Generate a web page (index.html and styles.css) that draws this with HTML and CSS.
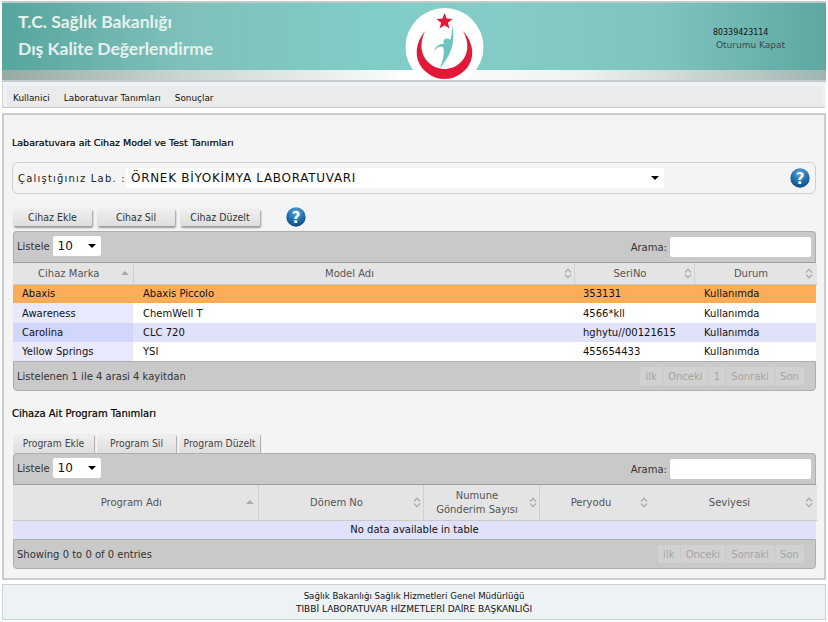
FILE: index.html
```html
<!DOCTYPE html>
<html lang="tr">
<head>
<meta charset="utf-8">
<title>Dış Kalite Değerlendirme</title>
<link rel="stylesheet" href="styles.css">
</head>
<body>
<svg class="defs" width="0" height="0" aria-hidden="true">
  <defs>
    <radialGradient id="hg" cx="0.5" cy="0.25" r="0.75">
      <stop offset="0" stop-color="#5aa6da"/>
      <stop offset="0.55" stop-color="#2273b0"/>
      <stop offset="1" stop-color="#114a7c"/>
    </radialGradient>
    <symbol id="help" viewBox="0 0 20 20">
      <circle cx="10" cy="10" r="9.7" fill="url(#hg)"/>
      <text x="10" y="15.5" text-anchor="middle" class="help-q">?</text>
    </symbol>
    <symbol id="sort" viewBox="0 0 8 11">
      <path d="M1 4.500 L4 1.200 L7 4.500 M1 6.500 L4 9.800 L7 6.500" fill="none" stroke="#aeaeae" stroke-width="1.300"/>
    </symbol>
  </defs>
</svg>
<header class="banner">
  <div class="banner-main">
    <div class="brand">
      <div class="brand-line">T.C. Sağlık Bakanlığı</div>
      <div class="brand-line">Dış Kalite Değerlendirme</div>
    </div>
    <div class="user">
      <div class="user-id">80339423114</div>
      <div class="user-out">Oturumu Kapat</div>
    </div>
  </div>
  <div class="banner-band"></div>
  <svg class="logo" width="80" height="72" viewBox="0 0 80 72">
    <circle cx="39.5" cy="39" r="39" fill="#fff"/>
    <path d="M20 23 C10 35 9 50 17 60 C24 68 32 71 39.5 71 C47 71 55 68 62 60 C70 50 69 35 58 23 C65 36 63 47 56 54 C51 59 45 61 39.5 61 C34 61 28 59 23 54 C16 47 14 36 20 23 Z" fill="#e31837"/>
    <polygon points="39.5,5 41.6,10.6 47.6,10.9 42.9,14.7 44.5,20.5 39.5,17.2 34.5,20.5 36.1,14.7 31.4,10.9 37.4,10.6" fill="#e31837"/>
    <circle cx="42" cy="34" r="3.500" fill="#6cc5c0"/>
    <path d="M47 17 C50 30 49 44 35 60 C38 51 40 46 38 39 C35 38 32 39 29 43 C31 38 35 35 40 36 C46 36 47 27 47 17 Z" fill="#6cc5c0"/>
  </svg>
</header>
<nav class="menu">
  <a class="menu-item">Kullanici</a>
  <a class="menu-item">Laboratuvar Tanımları</a>
  <a class="menu-item">Sonuçlar</a>
</nav>
<main class="content">
  <h1 class="page-title">Labaratuvara ait Cihaz Model ve Test Tanımları</h1>
  <section class="lab-box">
    <span class="lab-label">Çalıştığınız Lab. :</span>
    <div class="lab-select"><span>ÖRNEK BİYOKİMYA LABORATUVARI</span><i class="caret"></i></div>
    <svg class="help help-right"><use href="#help"/></svg>
  </section>
  <div class="actions">
    <button class="btn btn-1">Cihaz Ekle</button>
    <button class="btn btn-2">Cihaz Sil</button>
    <button class="btn btn-3">Cihaz Düzelt</button>
    <svg class="help help-inline"><use href="#help"/></svg>
  </div>
  <section class="dt">
    <div class="dt-top">
      <div class="dt-len">Listele <div class="len-select"><span>10</span><i class="caret"></i></div></div>
      <div class="dt-search">Arama: <div class="search-input"></div></div>
    </div>
    <table class="grid">
      <colgroup><col class="c1a"><col class="c1b"><col class="c1c"><col class="c1d"></colgroup>
      <thead>
        <tr>
          <th class="sorted">Cihaz Marka<i class="sort-up"></i></th>
          <th>Model Adı<svg class="sort-both"><use href="#sort"/></svg></th>
          <th>SeriNo<svg class="sort-both"><use href="#sort"/></svg></th>
          <th>Durum<svg class="sort-both"><use href="#sort"/></svg></th>
        </tr>
      </thead>
      <tbody>
        <tr class="selected"><td>Abaxis</td><td>Abaxis Piccolo</td><td>353131</td><td>Kullanımda</td></tr>
        <tr class="odd tall"><td>Awareness</td><td>ChemWell T</td><td>4566*kll</td><td>Kullanımda</td></tr>
        <tr class="even"><td>Carolina</td><td>CLC 720</td><td>hghytu//00121615</td><td>Kullanımda</td></tr>
        <tr class="odd"><td>Yellow Springs</td><td>YSI</td><td>455654433</td><td>Kullanımda</td></tr>
      </tbody>
    </table>
    <div class="dt-bottom">
      <div class="dt-info">Listelenen 1 ile 4 arasi 4 kayitdan</div>
      <div class="pager"><span>ilk</span><span>Onceki</span><span>1</span><span>Sonraki</span><span>Son</span></div>
    </div>
  </section>
  <h2 class="sub-title">Cihaza Ait Program Tanımları</h2>
  <div class="tabs">
    <button class="tab tab-1">Program Ekle</button>
    <button class="tab tab-2">Program Sil</button>
    <button class="tab tab-3">Program Düzelt</button>
  </div>
  <section class="dt">
    <div class="dt-top">
      <div class="dt-len">Listele <div class="len-select"><span>10</span><i class="caret"></i></div></div>
      <div class="dt-search">Arama: <div class="search-input"></div></div>
    </div>
    <table class="grid grid-2">
      <colgroup><col class="c2a"><col class="c2b"><col class="c2c"><col class="c2d"><col class="c2e"></colgroup>
      <thead>
        <tr>
          <th class="sorted">Program Adı<i class="sort-up"></i></th>
          <th>Dönem No<svg class="sort-both"><use href="#sort"/></svg></th>
          <th>Numune<br>Gönderim Sayısı<svg class="sort-both"><use href="#sort"/></svg></th>
          <th class="plain-right">Peryodu<svg class="sort-both"><use href="#sort"/></svg></th>
          <th>Seviyesi<svg class="sort-both"><use href="#sort"/></svg></th>
        </tr>
      </thead>
      <tbody>
        <tr class="even"><td class="empty" colspan="5">No data available in table</td></tr>
      </tbody>
    </table>
    <div class="dt-bottom">
      <div class="dt-info">Showing 0 to 0 of 0 entries</div>
      <div class="pager"><span>ilk</span><span>Onceki</span><span>Sonraki</span><span>Son</span></div>
    </div>
  </section>
</main>
<footer class="foot">
  <div class="foot-1">Sağlık Bakanlığı Sağlık Hizmetleri Genel Müdürlüğü</div>
  <div>TIBBİ LABORATUVAR HİZMETLERİ DAİRE BAŞKANLIĞI</div>
</footer>
</body>
</html>
```
FILE: styles.css
```css
* { box-sizing: border-box; }
html, body { margin: 0; padding: 0; }
body {
  width: 828px;
  height: 622px;
  overflow: hidden;
  background: #fff;
  color: #111;
  font-family: "DejaVu Sans", sans-serif;
  font-size: 10px;
  padding: 1px 2px 0 2px;
}
.defs { position: absolute; }
.help-q { font: bold 15px "DejaVu Sans", sans-serif; fill: #fff; }

.banner {
  position: relative;
  width: 824px;
  height: 81px;
  border-top: 2px solid #c3c9c8;
  border-bottom: 2px solid #c6c9ca;
}
.banner-main {
  height: 67px;
  display: flex;
  justify-content: space-between;
  background: linear-gradient(90deg, #55a69e 0%, #80c0ba 22%, #7fcdc7 45%, #84cbc6 62%, #7fc4be 80%, #5ea8a2 100%);
}
.banner-band {
  height: 10px;
  background: linear-gradient(90deg, #97aaa6 0%, #c9d6d4 22%, #f4f7f7 45%, #ffffff 50%, #eef2f2 70%, #c2d0ce 87%, #9fb5b1 100%);
}
.brand { padding: 5px 0 0 16px; }
.brand-line {
  font-family: Lato, sans-serif;
  font-weight: 700;
  font-size: 17.500px;
  line-height: 27px;
  color: #e6f1ef;
}
.user { width: 113px; padding-top: 23px; line-height: 13px; font-size: 9px; }
.user-id { color: #111; font-size: 8.800px; font-family: "DejaVu Sans Condensed", "DejaVu Sans", sans-serif; }
.user-out { color: #3d4a48; padding-left: 3px; }
.logo { position: absolute; left: 403px; top: 5px; }

.menu {
  width: 824px;
  height: 26px;
  display: flex;
  align-items: center;
  gap: 14px;
  padding: 2px 0 0 10px;
  background: #ebebeb;
  border-top: 4px solid #eef2f6;
  border-right: 3px solid #eef2f6;
  border-bottom: 1px solid #c8c8c8;
  border-left: 1px solid #cdd0d2;
  box-shadow: inset 4px 0 0 #eef2f6;
}
.menu-item { color: #111; font-size: 8.900px; }

.content {
  margin-top: 5px;
  width: 824px;
  height: 467px;
  background: #f4f4f4;
  border: 2px solid #cbcbcb;
  padding: 0 10px 0 8px;
}
.page-title {
  margin: 0;
  padding-top: 22px;
  height: 47px;
  font-size: 9.500px;
  font-weight: normal;
  color: #000;
  line-height: 12px;
  -webkit-text-stroke: 0.2px #000;
}
.lab-box {
  height: 32px;
  width: 804px;
  display: flex;
  align-items: center;
  border: 1px solid #cfcfcf;
  border-radius: 6px;
  padding: 0 5px 0 5px;
}
.lab-label { font-size: 10px; letter-spacing: 1.200px; width: 108px; color: #222; white-space: nowrap; }
.lab-select {
  width: 538px;
  height: 20px;
  background: #fff;
  border-radius: 2px;
  display: flex;
  align-items: center;
  justify-content: space-between;
  padding: 0 5px;
  font-size: 12px;
  letter-spacing: 0.700px;
  color: #111;
}
.caret {
  width: 0;
  height: 0;
  border-left: 4px solid transparent;
  border-right: 4px solid transparent;
  border-top: 4px solid #000;
}
.help { width: 20px; height: 20px; display: block; }
.help-right { margin-left: auto; }
.actions { display: flex; align-items: flex-start; margin-top: 14px; height: 23px; }
.btn {
  height: 18px;
  padding: 0;
  border: 0;
  border-radius: 2px;
  font: 10.500px "DejaVu Sans Condensed", "DejaVu Sans", sans-serif;
  color: #333;
  background: linear-gradient(#f0f0f0, #dedede);
  box-shadow: 1px 2px 2px #9a9a9a;
}
.btn-1 { width: 79px; margin-right: 5px; margin-left: 1px; }
.btn-2 { width: 78px; margin-right: 5px; }
.btn-3 { width: 80px; margin-right: 26px; }
.help-inline { margin-top: -1px; }

.dt { width: 803px; margin-left: 1px; }
.dt-top {
  height: 32px;
  background: #c9c9c9;
  border: 1px solid #aeaeae;
  border-bottom-color: #9d9d9d;
  border-radius: 4px 4px 0 0;
  display: flex;
  align-items: center;
  justify-content: space-between;
  padding: 0 4px 0 3px;
  color: #333;
}
.dt-len, .dt-search { display: flex; align-items: center; gap: 3px; font-size: 10px; }
.dt-len { padding-bottom: 2px; }
.len-select {
  width: 48px;
  height: 20px;
  background: #fff;
  border-radius: 2px;
  display: flex;
  align-items: center;
  justify-content: space-between;
  padding: 0 5px;
  font-size: 12px;
  color: #111;
}
.search-input { width: 141px; height: 20px; background: #fff; border-radius: 2px; }

.grid { width: 803px; border-collapse: collapse; table-layout: fixed; font-size: 10px; }
.c1a { width: 120px; } .c1b { width: 441px; } .c1c { width: 120px; } .c1d { width: 122px; }
.c2a { width: 245px; } .c2b { width: 165px; } .c2c { width: 116px; } .c2d { width: 112px; } .c2e { width: 165px; }
.grid th {
  position: relative;
  height: 21px;
  padding: 1px 8px 0 0;
  background: #e4e4e4;
  border-right: 1px solid #d0d0d0;
  border-bottom: 1px solid #c9c9c9;
  font-weight: normal;
  color: #555;
  text-align: center;
  line-height: 14px;
}
.grid th:last-child { border-right: 1px solid #e4e4e4; }
.grid-2 th { height: 35px; }
.grid-2 th.plain-right { border-right-color: #e4e4e4; }
.sort-up {
  position: absolute; right: 4px; top: 50%; margin-top: -2px;
  width: 0; height: 0;
  border-left: 4px solid transparent; border-right: 4px solid transparent;
  border-bottom: 4px solid #aaa;
}
.sort-both {
  position: absolute; right: 2px; top: 50%; margin-top: -5.500px;
  width: 8px; height: 11px;
}
.grid th:last-child .sort-both, .grid th.plain-right .sort-both { right: 3px; }
.grid td {
  height: 19px;
  padding: 1px 9px 0;
  line-height: 12px;
  color: #111;
  white-space: nowrap;
}
.grid td:nth-child(2), .grid td:nth-child(4) { padding-left: 10px; }
.tall td { height: 20px; }
.selected td { background: #fdad57; }
.odd td { background: #fff; }
.even td { background: #e0e1fb; }
.odd td:first-child { background: #e8e9fd; }
.even td:first-child { background: #d3d6fb; }
.grid td.empty { background: #e0e1fb; text-align: center; padding: 0; height: 19px; }

.dt-bottom {
  height: 30px;
  background: #c9c9c9;
  border: 1px solid #aeaeae;
  border-radius: 0 0 4px 4px;
  display: flex;
  align-items: center;
  justify-content: space-between;
  padding: 0 11px 0 3px;
  color: #333;
}
.dt-info { padding-top: 1px; }
.pager { display: flex; gap: 1px; color: #a5a5a5; }
.pager span { background: #d1d1d1; padding: 0 5.100px; height: 18px; line-height: 20px; }

.sub-title {
  margin: 0;
  padding-top: 17px;
  height: 44px;
  font-size: 10px;
  font-weight: normal;
  color: #000;
  -webkit-text-stroke: 0.2px #000;
}
.tabs { display: flex; height: 18px; margin-left: 1px; gap: 3px; }
.tab {
  height: 18px;
  padding: 0 0 2px;
  border: 0;
  border-radius: 2px 2px 0 0;
  font: 10.300px "DejaVu Sans Condensed", "DejaVu Sans", sans-serif;
  color: #444;
  background: linear-gradient(#f0f0f0, #dedede);
  box-shadow: 1px 0 1px #aaa;
}
.tab-1 { width: 81px; } .tab-2 { width: 79px; } .tab-3 { width: 81px; }

.foot {
  margin-top: 4px;
  width: 824px;
  height: 36px;
  background: #edf2f5;
  border: 1px solid #cfd2d4;
  text-align: center;
  padding-top: 5px;
  font-size: 9px;
  line-height: 13px;
  color: #111;
}
.foot-1 { font-size: 8.650px; }
```
